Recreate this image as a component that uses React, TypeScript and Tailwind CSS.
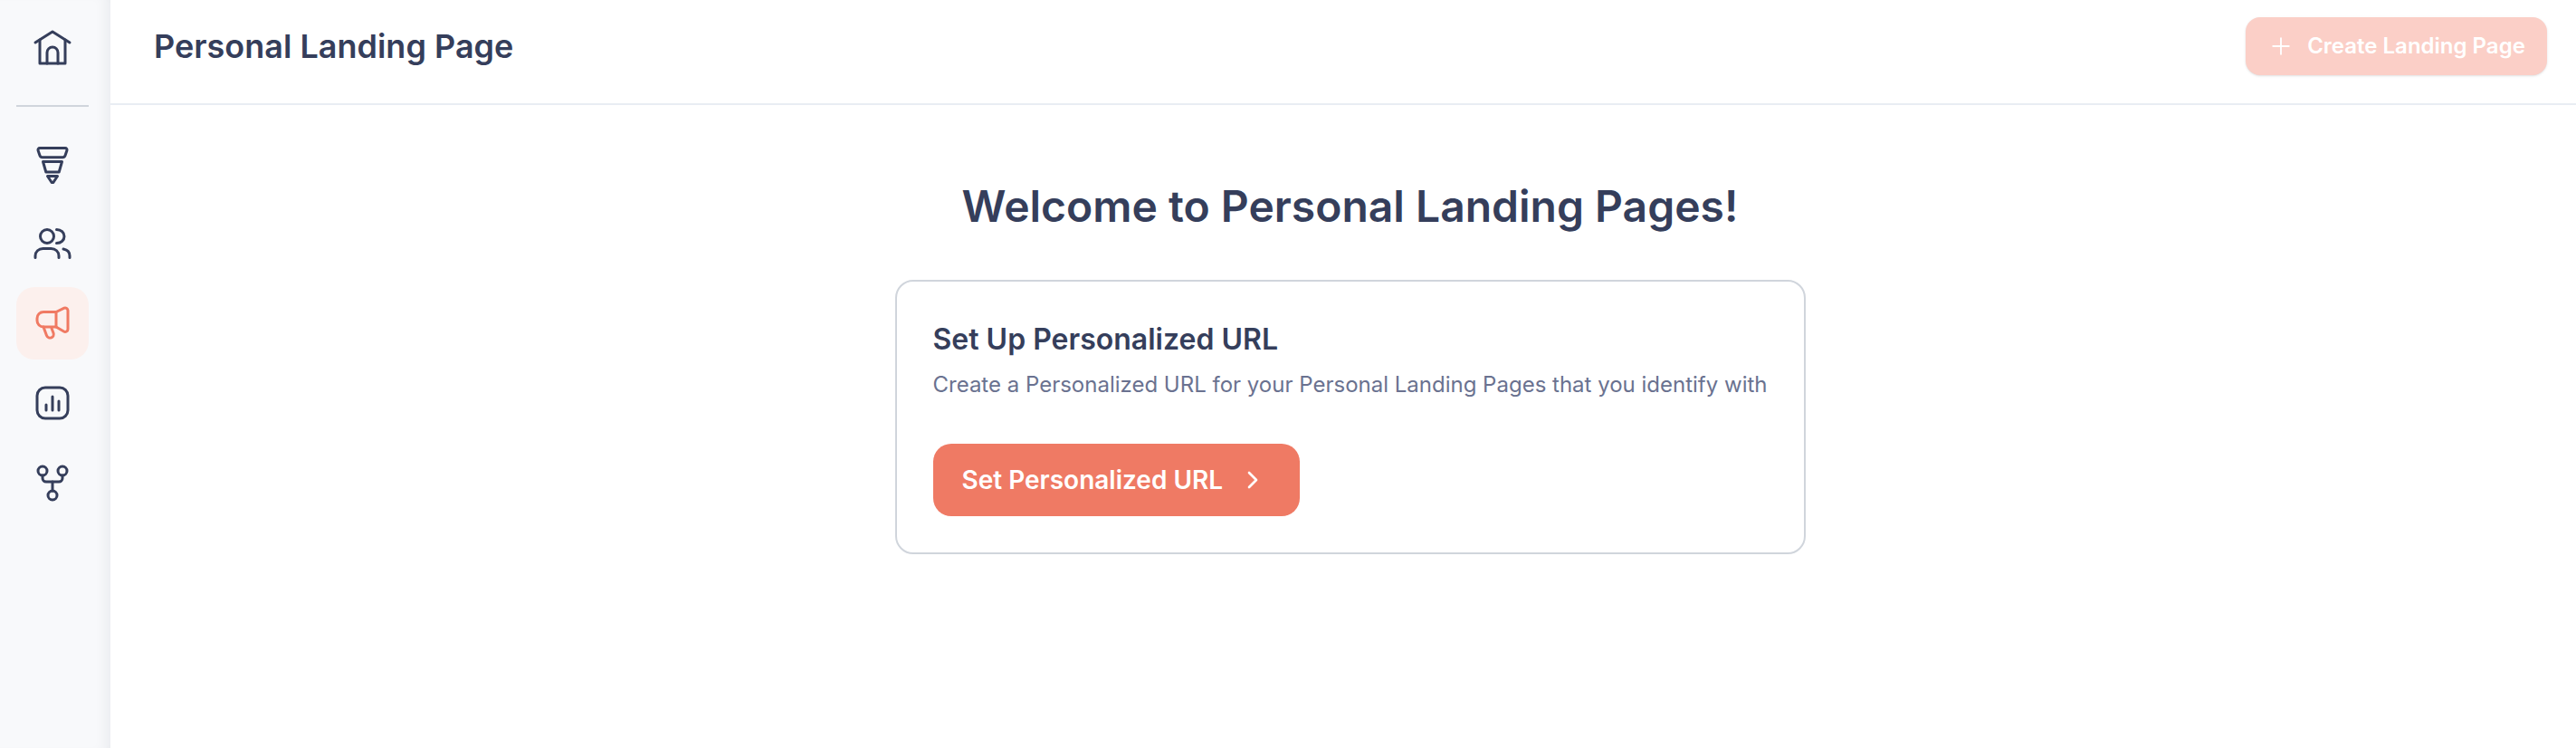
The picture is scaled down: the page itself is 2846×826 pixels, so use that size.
import React from 'react';
import { ChevronRight, Plus } from 'lucide-react';

const HomeIcon = () => (
  <svg width="48" height="48" viewBox="0 0 48 48" fill="none" stroke="currentColor" strokeWidth="3" strokeLinecap="round" strokeLinejoin="round">
    <path d="M5 19 24 7l19 12" />
    <path d="M10 16v26h28V16" />
    <path d="M18 42V30a6 6 0 0 1 12 0v12" />
  </svg>
);

const FunnelIcon = () => (
  <svg width="48" height="48" viewBox="0 0 48 48" fill="none" stroke="currentColor" strokeWidth="3" strokeLinecap="round" strokeLinejoin="round">
    <path d="M10 6.500h28a2 2 0 0 1 1.900 2.700L38 14.800a3 3 0 0 1-2.800 2H12.800a3 3 0 0 1-2.800-2L8.100 9.200A2 2 0 0 1 10 6.500Z" />
    <path d="M13.500 21.500h21l-3.300 11.500H16.800Z" />
    <path d="M18.500 37.500h11l-4.300 6.500a1.500 1.500 0 0 1-2.400 0Z" />
  </svg>
);

const UsersIcon = () => (
  <svg width="48" height="48" viewBox="0 0 48 48" fill="none" stroke="currentColor" strokeWidth="3" strokeLinecap="round" strokeLinejoin="round">
    <circle cx="18" cy="16" r="7.500" />
    <path d="M28.500 8.500c5 0 8.500 3.300 8.500 7.500s-3.500 7.500-8.500 7.500" />
    <path d="M5 39.500v-2c0-4.700 3.800-8 8.500-8h9c4.700 0 8.500 3.300 8.500 8v2" />
    <path d="M36 30c4 .8 7 3.500 7 7.500v2" />
  </svg>
);

const MegaphoneIcon = () => (
  <svg width="48" height="48" viewBox="0 0 48 48" fill="none" stroke="currentColor" strokeWidth="3" strokeLinecap="round" strokeLinejoin="round">
    <path d="M28 11.500H14a7 7 0 0 0-7 7v2.500a7 7 0 0 0 7 7h14" />
    <path d="M28 11.500V28l8.500 5a3 3 0 0 0 4.500-2.600V9.800A3 3 0 0 0 37 7.200Z" />
    <path d="M14 28l3.500 9.500a4 4 0 0 0 7.500-2.800L23 29.500" />
  </svg>
);

const ChartIcon = () => (
  <svg width="48" height="48" viewBox="0 0 48 48" fill="none" stroke="currentColor" strokeWidth="3" strokeLinecap="round" strokeLinejoin="round">
    <rect x="7" y="7" width="34" height="34" rx="9" />
    <path d="M17 26v6M24 17v15M31 22v10" />
  </svg>
);

const ForkIcon = () => (
  <svg width="48" height="48" viewBox="0 0 48 48" fill="none" stroke="currentColor" strokeWidth="3" strokeLinecap="round" strokeLinejoin="round">
    <circle cx="13" cy="11" r="5" />
    <circle cx="35" cy="11" r="5" />
    <circle cx="24" cy="38" r="5" />
    <path d="M13 16v3a4 4 0 0 0 4 4h14a4 4 0 0 0 4-4v-3" />
    <path d="M24 23v10" />
  </svg>
);

const NavItem = ({ active, children }: { active?: boolean; children: React.ReactNode }) => (
  <div className={active ? 'w-20 h-20 rounded-[20px] flex items-center justify-center bg-[#fcf0ed] text-[#f07a63]' : 'w-20 h-20 rounded-[20px] flex items-center justify-center text-[#353e5b]'}>
    {children}
  </div>
);

export default function App() {
  return (
    <div className="flex w-full h-[826px] bg-white overflow-hidden font-['Inter',sans-serif] text-[#353e5b]">
      <div className="w-[122px] shrink-0 h-full flex flex-col bg-[#f8f9fb] pl-[18px] pt-3 shadow-[inset_-14px_0_14px_-10px_rgba(52,61,91,0.08)]">
        <NavItem><HomeIcon /></NavItem>
        <div className="w-20 h-0.5 bg-[#d0d5dc] mt-6 mb-[23px]" />
        <div className="flex flex-col gap-2">
          <NavItem><FunnelIcon /></NavItem>
          <NavItem><UsersIcon /></NavItem>
          <NavItem active><MegaphoneIcon /></NavItem>
          <NavItem><ChartIcon /></NavItem>
          <NavItem><ForkIcon /></NavItem>
        </div>
      </div>

      <div className="flex-1 flex flex-col min-w-0">
        <div className="h-[116px] shrink-0 flex items-center justify-between border-b-2 border-[#e9edf3] pl-12 pr-8 pb-[13px]">
          <h1 className="text-[36px] leading-[44px] font-semibold">Personal Landing Page</h1>
          <button className="h-16 w-[333px] rounded-2xl bg-[#fbcfc7] text-white flex items-center justify-center gap-[14px] text-[24px] font-semibold shadow-sm">
            <Plus size={30} strokeWidth={1.5} />
            Create Landing Page
          </button>
        </div>

        <div className="flex-1 flex flex-col items-center pl-[15px] pt-[82px]">
          <h2 className="text-[48px] leading-[60px] font-semibold">Welcome to Personal Landing Pages!</h2>
          <div className="mt-[51px] w-[1006px] h-[303px] rounded-[20px] border-2 border-[#d0d5dc] px-10 pt-[44px]">
            <h3 className="text-[32px] leading-[40px] font-semibold">Set Up Personalized URL</h3>
            <p className="mt-[12px] text-[24px] leading-[36px] text-[#6a7290] whitespace-nowrap">Create a Personalized URL for your Personal Landing Pages that you identify with</p>
            <button className="mt-[47px] h-20 w-[405px] rounded-[20px] bg-[#ef7a64] text-white flex items-center gap-[17px] pl-8 text-[28px] font-semibold">
              Set Personalized URL
              <ChevronRight size={32} strokeWidth={2} />
            </button>
          </div>
        </div>
      </div>
    </div>
  );
}
